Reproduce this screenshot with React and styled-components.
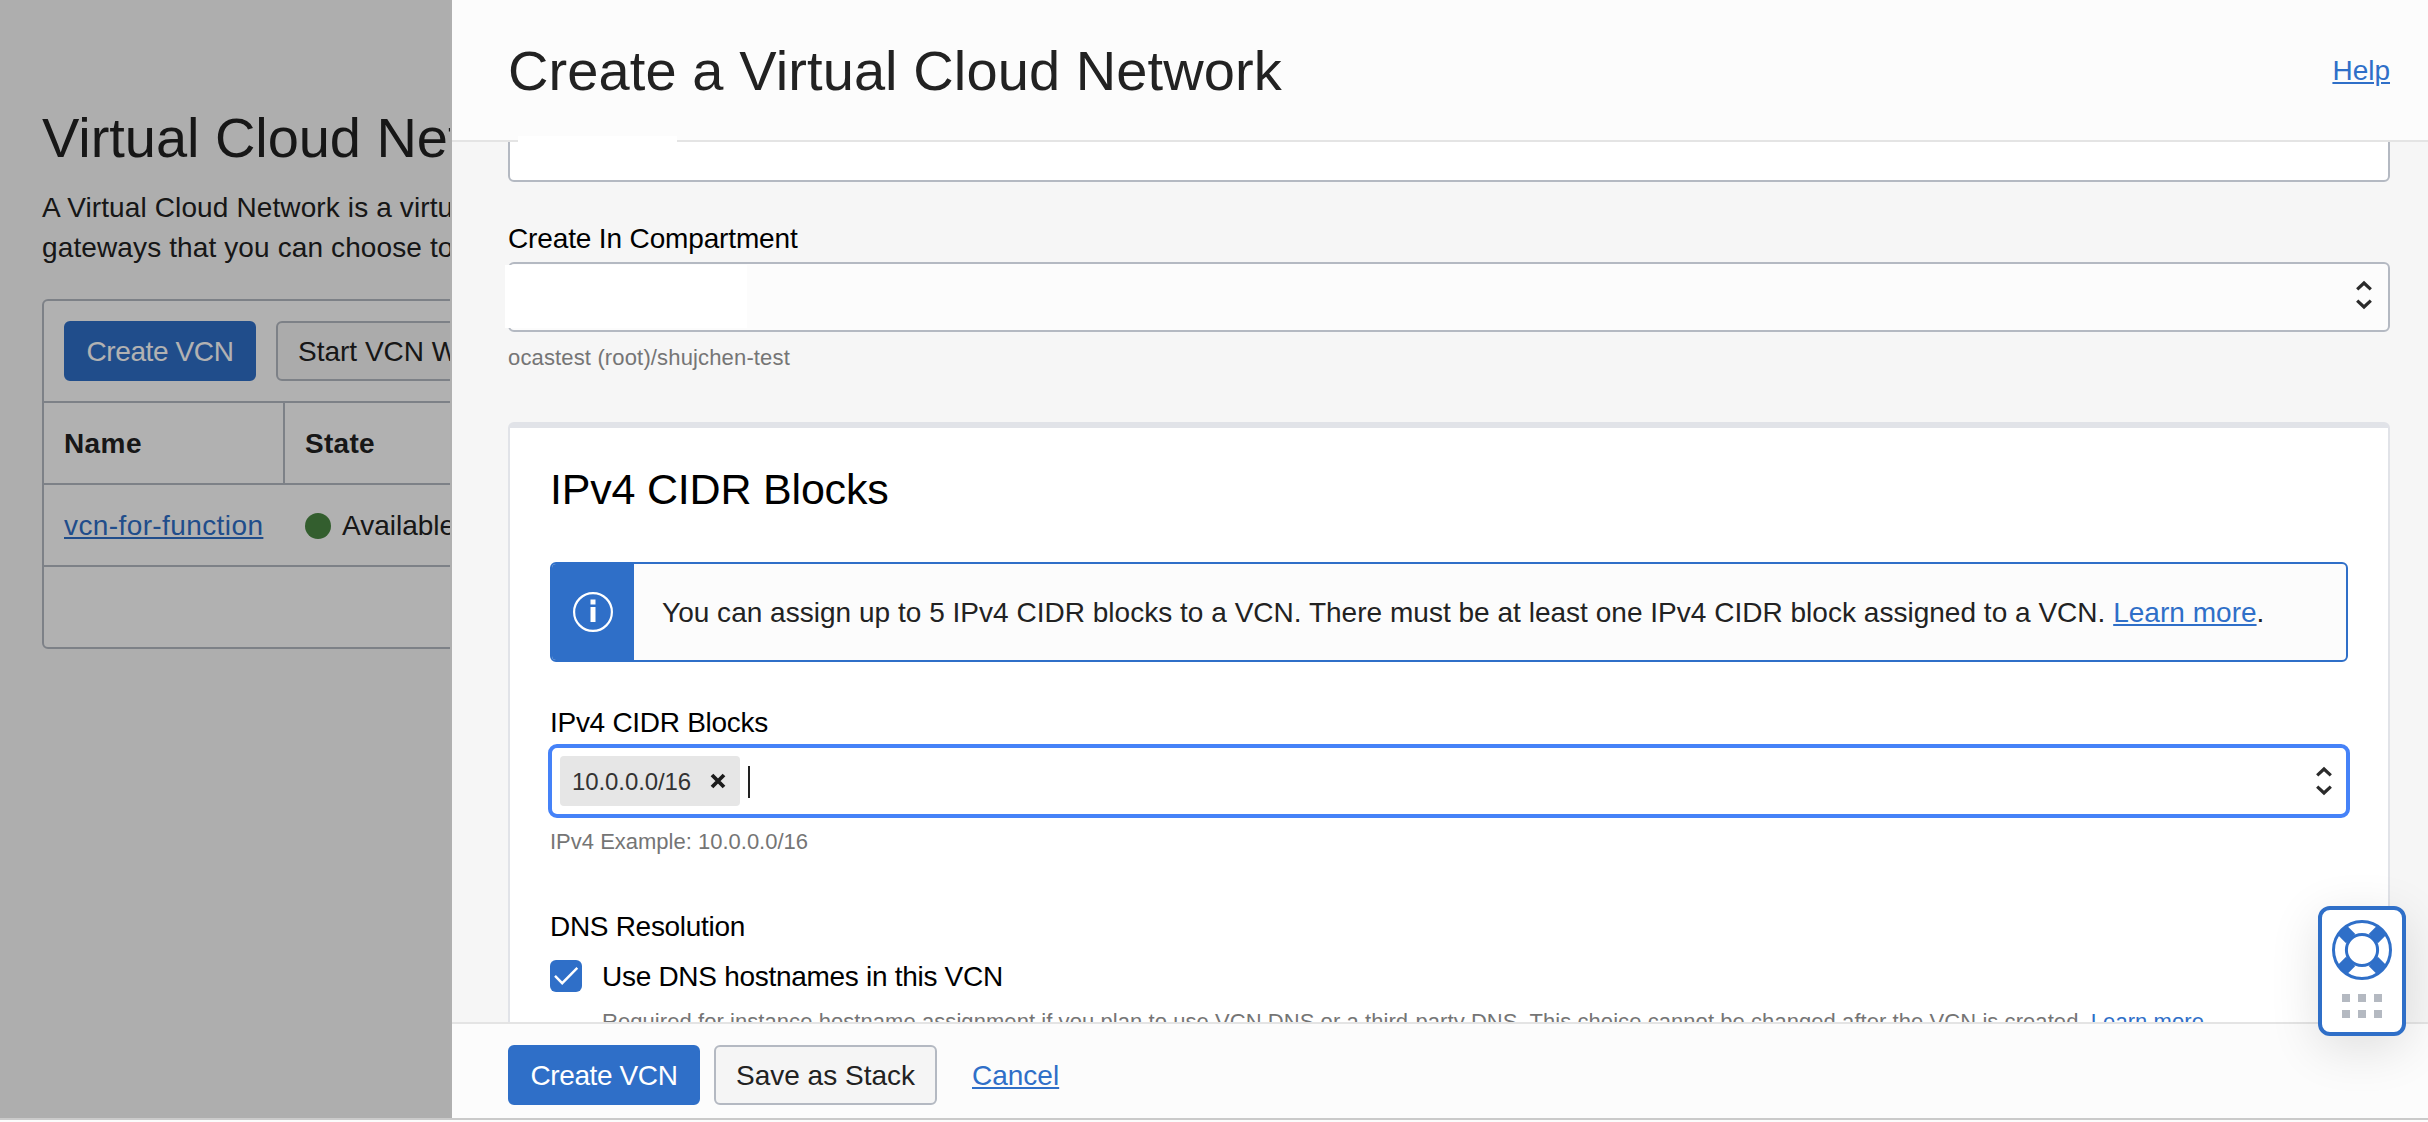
import React from "react";
import styled, { createGlobalStyle, css } from "styled-components";

const color = {
  primary: "#2f6fc8",
  focus: "#4582f8",
  line: "#b4b9c2",
  rule: "#e4e4e4",
  cardLine: "#e1e3e8",
  ink: "#222222",
  muted: "#757575",
  surface: "#fcfcfc",
};

const GlobalStyle = createGlobalStyle`
  * { box-sizing: border-box; }
  body {
    margin: 0;
    font-family: "Liberation Sans", Arial, sans-serif;
    font-size: 28px;
    line-height: 40px;
    color: ${color.ink};
    overflow: hidden;
  }
`;

const Shell = styled.div`
  position: relative;
  display: flex;
  flex-direction: column;
  width: 2428px;
  height: 1122px;
  overflow: hidden;
  background: ${color.surface};
`;

const Stage = styled.div`
  display: flex;
  height: 1120px;
  border-bottom: 2px solid #cacaca;
`;

const Link = styled.a`
  color: ${color.primary};
  text-decoration: underline;
  text-decoration-thickness: 2px;
  text-underline-offset: 2px;
`;

const Button = styled.button`
  flex: none;
  height: 60px;
  padding: 2px 20px 0;
  border: 2px solid ${(p) => (p.$primary ? color.primary : color.line)};
  border-radius: 6px;
  background: ${(p) => (p.$primary ? color.primary : "#f5f5f5")};
  color: ${(p) => (p.$primary ? "#ffffff" : color.ink)};
  font: inherit;
  letter-spacing: ${(p) => (p.$primary ? "-0.4px" : "0")};
  white-space: nowrap;
  ${(p) => p.$width && css`width: ${p.$width}px; padding: 2px 0 0;`}
`;

/* Page behind the drawer */

const Page = styled.main`
  position: relative;
  flex: none;
  width: 450px;
  padding: 108px 0 0 42px;
  overflow: hidden;
  white-space: nowrap;
  background: #f9f9f9;
`;

const Scrim = styled.div`
  position: absolute;
  inset: 0;
  background: rgba(0, 0, 0, 0.3);
`;

const PageTitle = styled.h1`
  margin: 0 0 20px;
  font-size: 56px;
  font-weight: 400;
  line-height: 60px;
  letter-spacing: -0.05px;
`;

const Intro = styled.p`
  margin: 0 0 31px;
  letter-spacing: 0.12px;
`;

const TableCard = styled.section`
  width: 900px;
  border: 2px solid ${color.line};
  border-radius: 6px;
  background: #fefefe;
`;

const Toolbar = styled.div`
  display: flex;
  gap: 20px;
  height: 100px;
  padding: 20px;
`;

const Row = styled.div`
  display: grid;
  grid-template-columns: 241px 1fr;
  height: 82px;
  border-top: 2px solid ${color.line};
`;

const Cell = styled.div`
  display: flex;
  align-items: center;
  gap: 11px;
  padding: 2px 20px 0;
  font-weight: ${(p) => (p.$head ? 700 : 400)};
  letter-spacing: ${(p) => p.$tracking || 0}px;
  border-right: ${(p) => (p.$divided ? `2px solid ${color.line}` : "0")};
`;

const StatusDot = styled.span`
  width: 26px;
  height: 26px;
  border-radius: 50%;
  background: #498742;
`;

/* Drawer */

const Drawer = styled.aside`
  flex: 1;
  display: flex;
  flex-direction: column;
  min-width: 0;
  border-left: 2px solid #b0b0b0;
`;

const DrawerHeader = styled.header`
  position: relative;
  flex: none;
  display: flex;
  align-items: center;
  justify-content: space-between;
  height: 142px;
  padding: 2px 38px 0 56px;
  border-bottom: 2px solid ${color.rule};
  background: ${color.surface};
`;

const DrawerTitle = styled.h2`
  margin: 0;
  font-size: 56px;
  font-weight: 400;
  line-height: 60px;
  letter-spacing: 0.1px;
`;

const DrawerBody = styled.div`
  flex: 1;
  min-height: 0;
  padding: 0 38px 0 56px;
  overflow: hidden;
  background: #f6f6f6;
`;

const DrawerFooter = styled.footer`
  flex: none;
  display: flex;
  align-items: center;
  gap: 14px;
  height: 96px;
  padding: 8px 38px 0 56px;
  border-top: 2px solid ${color.rule};
  background: ${color.surface};
`;

const CancelLink = styled(Link)`
  margin: 2px 0 0 21px;
`;

const Mask = styled.span`
  position: absolute;
  left: ${(p) => p.$left}px;
  top: ${(p) => p.$top}px;
  width: ${(p) => p.$width}px;
  height: ${(p) => p.$height}px;
  background: #ffffff;
`;

const Label = styled.div`
  height: 39px;
  margin-top: ${(p) => p.$top}px;
  color: #000000;
  letter-spacing: ${(p) => p.$tracking || 0}px;
`;

const Hint = styled.div`
  margin-top: ${(p) => p.$top}px;
  font-size: 22px;
  line-height: 30px;
  color: ${color.muted};
  letter-spacing: ${(p) => p.$tracking || 0}px;
  white-space: nowrap;
`;

const TextField = styled.div`
  height: 70px;
  margin-top: -30px;
  border: 2px solid ${color.line};
  border-radius: 6px;
  background: #ffffff;
`;

const Select = styled.div`
  position: relative;
  display: flex;
  align-items: center;
  justify-content: flex-end;
  height: 70px;
  margin-top: 4px;
  padding: 0 14px 4px;
  border: 2px solid ${color.line};
  border-radius: 6px;
  background: ${color.surface};
`;

const Card = styled.section`
  height: 800px;
  margin-top: 49px;
  padding: 36px 40px 0;
  border: 2px solid ${color.cardLine};
  border-top-width: 6px;
  border-radius: 6px;
  background: #ffffff;
`;

const CardTitle = styled.h3`
  margin: 0 0 48px;
  font-size: 43px;
  font-weight: 400;
  line-height: 50px;
  letter-spacing: -0.2px;
  color: #000000;
`;

const Notice = styled.div`
  display: flex;
  height: 100px;
  border: 2px solid ${color.primary};
  border-radius: 6px;
  overflow: hidden;
  background: ${color.surface};
`;

const NoticeIcon = styled.div`
  flex: none;
  display: flex;
  align-items: center;
  justify-content: center;
  width: 82px;
  background: ${color.primary};
`;

const NoticeText = styled.div`
  align-self: center;
  padding: 2px 0 0 28px;
  letter-spacing: 0.02px;
  white-space: nowrap;
`;

const TagField = styled.div`
  display: flex;
  align-items: center;
  height: 74px;
  margin: 2px -2px 0;
  padding: 0 12px 0 8px;
  border: 4px solid ${color.focus};
  border-radius: 9px;
  background: #ffffff;
`;

const Tag = styled.span`
  display: flex;
  align-items: center;
  gap: 19px;
  width: 180px;
  height: 50px;
  padding: 2px 0 0 12px;
  border-radius: 4px;
  background: #e6e6e6;
  color: #333333;
  font-size: 24px;
  letter-spacing: -0.1px;

  svg {
    margin-bottom: 2px;
  }
`;

const Caret = styled.span`
  width: 2px;
  height: 32px;
  margin: 2px auto 0 8px;
  background: #222222;
`;

const CheckRow = styled.label`
  display: flex;
  align-items: center;
  gap: 20px;
  height: 40px;
  margin-top: 10px;
  color: #000000;
`;

const CheckBox = styled.span`
  display: flex;
  width: 32px;
  height: 32px;
  border-radius: 6px;
  background: ${color.primary};
`;

const CheckText = styled.span`
  padding-top: 2px;
  letter-spacing: -0.29px;
`;

const CheckHint = styled(Hint)`
  padding-left: 52px;
`;

/* Floating support widget */

const Support = styled.div`
  position: absolute;
  right: 22px;
  top: 906px;
  display: flex;
  flex-direction: column;
  align-items: center;
  gap: 14px;
  width: 88px;
  height: 130px;
  padding-top: 10px;
  border: 4px solid ${color.primary};
  border-radius: 12px;
  background: #ffffff;
  box-shadow: 0 12px 50px rgba(0, 0, 0, 0.12);
`;

const Dots = styled.div`
  display: grid;
  grid-template-columns: repeat(3, 8px);
  grid-auto-rows: 8px;
  gap: 8px;
`;

const Dot = styled.span`
  background: #b4b9c1;
`;

const Arrows = () => (
  <svg width="20" height="32" viewBox="0 0 20 32" fill="none" stroke="#2b2b2b" strokeWidth="3.2">
    <path d="M3.200 10.400 10 4l6.800 6.400M3.200 21.600 10 28l6.800-6.400" />
  </svg>
);

const InfoIcon = () => (
  <svg width="40" height="40" viewBox="0 0 40 40" fill="none">
    <circle cx="20" cy="20" r="18.900" stroke="#fff" strokeWidth="2.200" />
    <path d="M17.500 7.500h5v5h-5zM17.500 15h5v15h-5z" fill="#fff" />
  </svg>
);

const CloseIcon = () => (
  <svg width="16" height="16" viewBox="0 0 16 16" stroke="#1c1c1c" strokeWidth="3.800">
    <path d="M2 2l12 12M14 2 2 14" />
  </svg>
);

const TickIcon = () => (
  <svg width="32" height="32" viewBox="0 0 32 32" fill="none" stroke="#fff" strokeWidth="2.400">
    <path d="M5 15.800 12.200 23.200 27.300 7.800" />
  </svg>
);

const Lifebuoy = () => (
  <svg width="60" height="60" viewBox="-30 -30 60 60" fill="none" stroke={color.primary}>
    <circle r="28.500" strokeWidth="3" />
    <circle r="15.600" strokeWidth="3" />
    {[45, 135, 225, 315].map((a) => (
      <path key={a} d="M16 0H28" strokeWidth="13" transform={`rotate(${a})`} />
    ))}
  </svg>
);

export default function App() {
  return (
    <Shell>
      <GlobalStyle />
      <Stage>
        <Page>
          <PageTitle>Virtual Cloud Networks</PageTitle>
          <Intro>
            A Virtual Cloud Network is a virtual
            <br />
            gateways that you can choose to use
          </Intro>
          <TableCard>
            <Toolbar>
              <Button $primary $width={192}>Create VCN</Button>
              <Button>Start VCN Wizard</Button>
            </Toolbar>
            <Row>
              <Cell $head $divided $tracking={0.4}>Name</Cell>
              <Cell $head $tracking={0.3}>State</Cell>
            </Row>
            <Row>
              <Cell $tracking={0.4}>
                <Link>vcn-for-function</Link>
              </Cell>
              <Cell>
                <StatusDot />
                Available
              </Cell>
            </Row>
            <Row />
          </TableCard>
          <Scrim />
        </Page>

        <Drawer>
          <DrawerHeader>
            <DrawerTitle>Create a Virtual Cloud Network</DrawerTitle>
            <Link>Help</Link>
            <Mask $left={66} $top={136} $width={159} $height={6} />
          </DrawerHeader>

          <DrawerBody>
            <TextField />
            <Label $top={37} $tracking={-0.14}>Create In Compartment</Label>
            <Select>
              <Mask $left={-5} $top={1} $width={242} $height={63} />
              <Arrows />
            </Select>
            <Hint $top={11} $tracking={0.15}>ocastest (root)/shujchen-test</Hint>

            <Card>
              <CardTitle>IPv4 CIDR Blocks</CardTitle>
              <Notice>
                <NoticeIcon>
                  <InfoIcon />
                </NoticeIcon>
                <NoticeText>
                  You can assign up to 5 IPv4 CIDR blocks to a VCN. There must be at least one IPv4 CIDR
                  block assigned to a VCN. <Link>Learn more</Link>.
                </NoticeText>
              </Notice>

              <Label $top={41} $tracking={-0.28}>IPv4 CIDR Blocks</Label>
              <TagField>
                <Tag>
                  10.0.0.0/16
                  <CloseIcon />
                </Tag>
                <Caret />
                <Arrows />
              </TagField>
              <Hint $top={9}>IPv4 Example: 10.0.0.0/16</Hint>

              <Label $top={50} $tracking={-0.3}>DNS Resolution</Label>
              <CheckRow>
                <CheckBox>
                  <TickIcon />
                </CheckBox>
                <CheckText>Use DNS hostnames in this VCN</CheckText>
              </CheckRow>
              <CheckHint $top={11} $tracking={0.065}>
                Required for instance hostname assignment if you plan to use VCN DNS or a third-party
                DNS. This choice cannot be changed after the VCN is created. <Link>Learn more</Link>
              </CheckHint>
            </Card>
          </DrawerBody>

          <DrawerFooter>
            <Button $primary $width={192}>Create VCN</Button>
            <Button $width={223}>Save as Stack</Button>
            <CancelLink>Cancel</CancelLink>
          </DrawerFooter>
        </Drawer>
      </Stage>

      <Support>
        <Lifebuoy />
        <Dots>
          {Array.from({ length: 6 }, (_, i) => (
            <Dot key={i} />
          ))}
        </Dots>
      </Support>
    </Shell>
  );
}
